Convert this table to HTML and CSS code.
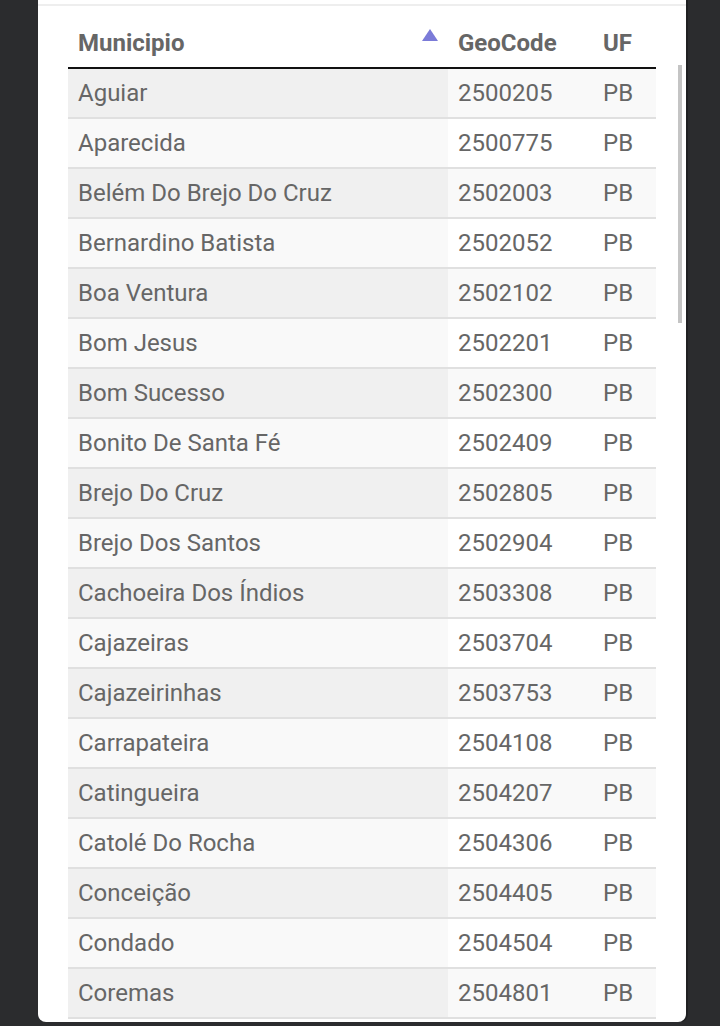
FILE: index.html
```html
<!DOCTYPE html>
<html lang="pt-BR">
<head>
    <meta charset="UTF-8">
    <meta name="viewport" content="width=device-width, initial-scale=1.0">
    <title>Municípios</title>
    <link rel="stylesheet" href="styles.css">
</head>
<body>
    <div class="card">
        <div class="table-wrap">
            <table class="data-table">
                <thead>
                    <tr>
                        <th class="col-name sorting-asc">Municipio<span class="sort-icon"></span></th>
                        <th class="col-geo">GeoCode</th>
                        <th class="col-uf">UF</th>
                    </tr>
                </thead>
                <tbody>
                    <tr><td class="sorted">Aguiar</td><td>2500205</td><td>PB</td></tr>
                    <tr><td class="sorted">Aparecida</td><td>2500775</td><td>PB</td></tr>
                    <tr><td class="sorted">Belém Do Brejo Do Cruz</td><td>2502003</td><td>PB</td></tr>
                    <tr><td class="sorted">Bernardino Batista</td><td>2502052</td><td>PB</td></tr>
                    <tr><td class="sorted">Boa Ventura</td><td>2502102</td><td>PB</td></tr>
                    <tr><td class="sorted">Bom Jesus</td><td>2502201</td><td>PB</td></tr>
                    <tr><td class="sorted">Bom Sucesso</td><td>2502300</td><td>PB</td></tr>
                    <tr><td class="sorted">Bonito De Santa Fé</td><td>2502409</td><td>PB</td></tr>
                    <tr><td class="sorted">Brejo Do Cruz</td><td>2502805</td><td>PB</td></tr>
                    <tr><td class="sorted">Brejo Dos Santos</td><td>2502904</td><td>PB</td></tr>
                    <tr><td class="sorted">Cachoeira Dos Índios</td><td>2503308</td><td>PB</td></tr>
                    <tr><td class="sorted">Cajazeiras</td><td>2503704</td><td>PB</td></tr>
                    <tr><td class="sorted">Cajazeirinhas</td><td>2503753</td><td>PB</td></tr>
                    <tr><td class="sorted">Carrapateira</td><td>2504108</td><td>PB</td></tr>
                    <tr><td class="sorted">Catingueira</td><td>2504207</td><td>PB</td></tr>
                    <tr><td class="sorted">Catolé Do Rocha</td><td>2504306</td><td>PB</td></tr>
                    <tr><td class="sorted">Conceição</td><td>2504405</td><td>PB</td></tr>
                    <tr><td class="sorted">Condado</td><td>2504504</td><td>PB</td></tr>
                    <tr><td class="sorted">Coremas</td><td>2504801</td><td>PB</td></tr>
                </tbody>
            </table>
            <div class="scroll-thumb"></div>
        </div>
    </div>
</body>
</html>
```

FILE: styles.css
```css
/* Página */
body {
    margin: 0;
    background-color: #2b2c2e;
    font-family: Roboto, "Noto Sans", Arial, sans-serif;
    color: #666;
}
.card {
    width: 648px;
    height: 1022px;
    margin-left: 38px;
    background-color: #fff;
    border-radius: 0 0 8px 8px;
    box-shadow: 2px 0 0 #1f2022;
    overflow: hidden;
    box-sizing: border-box;
    padding-top: 4px;
}
.table-wrap {
    position: relative;
    border-top: 2px solid #eeeeee;
    padding: 13px 30px 0 30px;
}

/* Tabela */
.data-table {
    width: 588px;
    border-collapse: collapse;
    font-size: 24px;
    line-height: 28px;
}
.data-table th,
.data-table td {
    padding: 10px;
    text-align: left;
    white-space: nowrap;
}
.data-table th {
    font-weight: bold;
    color: #666;
    border-bottom: 2px solid #111;
}
.data-table td {
    border-bottom: 2px solid #e0e0e0;
}
.col-name {
    width: 360px;
    position: relative;
}
.col-geo {
    width: 125px;
}
.data-table tbody tr:nth-child(odd) td {
    background-color: #f9f9f9;
}
.data-table tbody tr:nth-child(odd) td.sorted {
    background-color: #f0f0f0;
}
.data-table tbody tr:nth-child(even) td.sorted {
    background-color: #f9f9f9;
}

/* Ícone de ordenação */
.sort-icon {
    position: absolute;
    top: 10px;
    right: 10px;
    width: 0;
    height: 0;
    border-left: 8px solid transparent;
    border-right: 8px solid transparent;
    border-bottom: 12px solid #7b7bd8;
}

/* Barra de rolagem */
.scroll-thumb {
    position: absolute;
    top: 59px;
    right: 4px;
    width: 4px;
    height: 258px;
    background-color: #c4c4c4;
}
```
